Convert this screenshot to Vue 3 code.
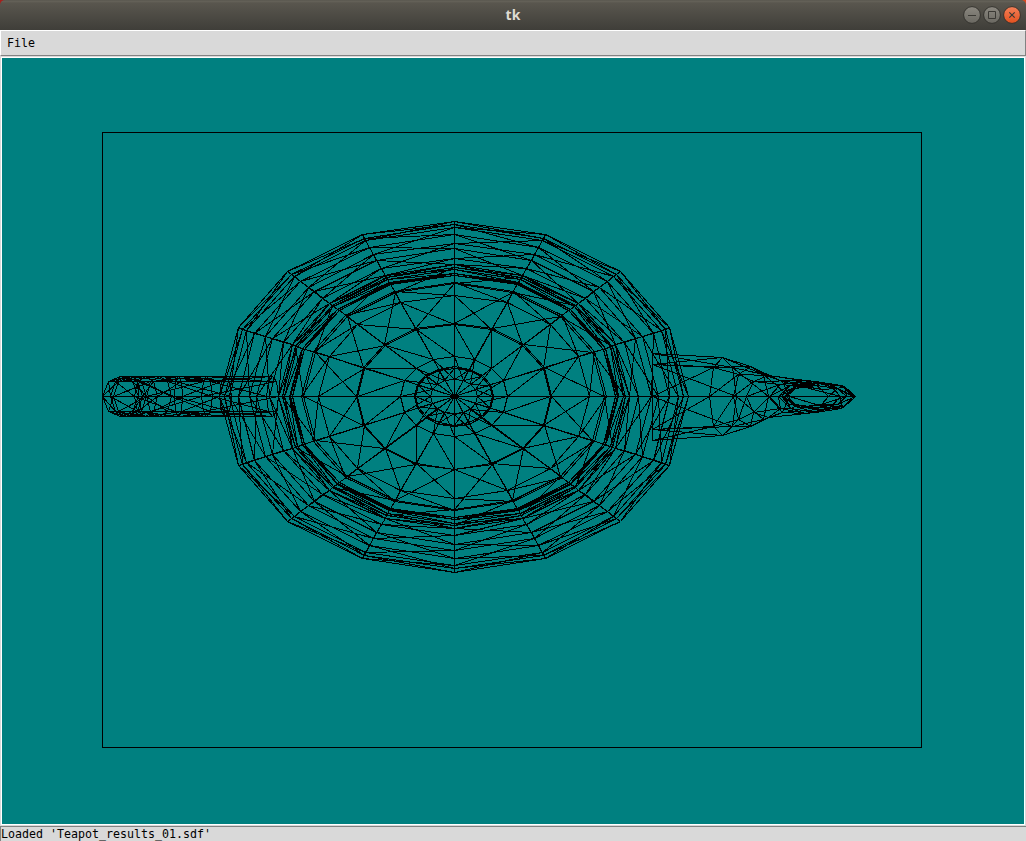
<script setup>
const CX = 453.5, CY = 396.1, SX = 117.03, SY = 87.77

// Profile curves of the revolved parts, as radii of cubic control points.
const profiles = [
  [0, 0.8, 0, 0.2],
  [0.2, 0.4, 1.3, 1.3],
  [1.4, 1.3375, 1.4375, 1.5],
  [1.5, 1.75, 2, 2],
  [2, 2, 1.5, 1.5],
  [1.5, 1.5, 1.425, 0],
]
// Tube patches: rows of [x, y] control points across half the tube.
const tubes = [
  [[[-1.6, 0], [-1.6, .3], [-1.5, .3], [-1.5, 0]], [[-2.3, 0], [-2.3, .3], [-2.5, .3], [-2.5, 0]],
   [[-2.7, 0], [-2.7, .3], [-3, .3], [-3, 0]], [[-2.7, 0], [-2.7, .3], [-3, .3], [-3, 0]]],
  [[[-2.7, 0], [-2.7, .3], [-3, .3], [-3, 0]], [[-2.7, 0], [-2.7, .3], [-3, .3], [-3, 0]],
   [[-2.5, 0], [-2.5, .3], [-2.65, .3], [-2.65, 0]], [[-2, 0], [-2, .3], [-1.9, .3], [-1.9, 0]]],
  [[[1.7, 0], [1.7, .66], [1.7, .66], [1.7, 0]], [[2.6, 0], [2.6, .66], [3.1, .66], [3.1, 0]],
   [[2.3, 0], [2.3, .25], [2.4, .25], [2.4, 0]], [[2.7, 0], [2.7, .25], [3.3, .25], [3.3, 0]]],
  [[[2.7, 0], [2.7, .25], [3.3, .25], [3.3, 0]], [[2.8, 0], [2.8, .25], [3.525, .25], [3.525, 0]],
   [[2.9, 0], [2.9, .15], [3.45, .15], [3.45, 0]], [[2.8, 0], [2.8, .15], [3.2, .15], [3.2, 0]]],
]
const weights = t => [(1 - t) ** 3, 3 * t * (1 - t) ** 2, 3 * t * t * (1 - t), t ** 3]
const STEPS = [0, 0.25, 0.5, 0.75, 1]
const segments = new Set()
const project = ([x, y]) => `${Math.round(CX + x * SX) + 0.5} ${Math.round(CY - y * SY) + 0.5}`

// Unit circle as four cubic quarter arcs, four steps each.
const circle = []
for (let q = 0; q < 4; q++) {
  const c = [1, 0, -1, 0][q], s = [0, 1, 0, -1][q]
  for (const t of STEPS.slice(0, 4)) {
    const w = weights(t)
    const x = w[0] + w[1] + 0.56 * w[2], y = 0.56 * w[1] + w[2] + w[3]
    circle.push([x * c - y * s, x * s + y * c])
  }
}
circle.push(circle[0])

function edge(a, b) {
  const p = project(a), q = project(b)
  if (p !== q) segments.add(p < q ? `M${p}L${q}` : `M${q}L${p}`)
}
function mesh(grid) {
  for (let i = 0; i < grid.length; i++) {
    for (let j = 0; j < grid[i].length; j++) {
      if (i + 1 < grid.length) edge(grid[i][j], grid[i + 1][j])
      if (j + 1 < grid[i].length) edge(grid[i][j], grid[i][j + 1])
      if (i + 1 < grid.length && j + 1 < grid[i].length) edge(grid[i][j], grid[i + 1][j + 1])
    }
  }
}
for (const profile of profiles) {
  mesh(STEPS.map(t => {
    const w = weights(t)
    const r = profile.reduce((s, v, i) => s + v * w[i], 0)
    return circle.map(([x, y]) => [r * x, r * y])
  }))
}
for (const rows of tubes) {
  for (const side of [1, -1]) {
    mesh(STEPS.map(t => {
      const w = weights(t)
      const line = STEPS.map(s => {
        const v = weights(s)
        let x = 0, y = 0
        rows.forEach((row, i) => row.forEach((p, j) => { x += w[i] * v[j] * p[0]; y += w[i] * v[j] * p[1] }))
        return [x, y * side]
      })
      return side === 1 ? line : line.reverse()
    }))
  }
}
const wire = [...segments].join('')
</script>

<template>
  <div class="window">
    <header class="titlebar">
      <span class="title">tk</span>
      <svg class="controls" width="60" height="20" viewBox="0 0 60 20">
        <defs>
          <linearGradient id="grey" x2="0" y2="1"><stop stop-color="#8b8880" /><stop offset="1" stop-color="#6a6861" /></linearGradient>
          <linearGradient id="red" x2="0" y2="1"><stop stop-color="#f58058" /><stop offset="1" stop-color="#e2511f" /></linearGradient>
        </defs>
        <g stroke="#34332e">
          <circle cx="10" cy="10" r="8.4" fill="url(#grey)" />
          <circle cx="30" cy="10" r="8.4" fill="url(#grey)" />
          <circle cx="50" cy="10" r="8.4" fill="url(#red)" />
        </g>
        <g fill="none" stroke="#3a3934">
          <path d="M6 10.500h8M26.500 6.500h7v7h-7z" />
          <path d="M47.300 7.300l5.400 5.400m0-5.400l-5.400 5.400" stroke-width="1.200" />
        </g>
      </svg>
    </header>
    <nav class="menubar"><span class="item">File</span></nav>
    <main class="view">
      <svg class="scene" width="1022" height="766" viewBox="2 58 1022 766" shape-rendering="crispEdges">
        <rect x="102.500" y="132.500" width="819" height="615" />
        <path :d="wire" />
      </svg>
    </main>
    <footer class="status">Loaded 'Teapot_results_01.sdf'</footer>
  </div>
</template>

<style>
body { margin: 0; background: #d9d9d9; overflow: hidden; }
</style>

<style scoped>
.window {
  width: 1026px; height: 841px; display: flex; flex-direction: column;
  background: linear-gradient(90deg, #a5201c 50%, #d9481c 50%);
}
.titlebar {
  flex: none; height: 30px; display: grid; grid-template-columns: 1fr auto 1fr; align-items: center;
  background: linear-gradient(#54524a 0, #66635a 1px, #59564e 3px, #3f3e39 30px);
  border-radius: 5px 5px 0 0;
}
.title { grid-column: 2; font: bold 14px/20px "Noto Sans", "Open Sans", sans-serif; color: #dfdbd2; }
.controls { justify-self: end; margin-right: 4px; }
.menubar {
  flex: none; box-sizing: border-box; height: 26px; border: 1px solid; border-color: #fff #828282 #828282 #fff;
  display: flex; align-items: center; padding-left: 6px; background: #d9d9d9;
}
.item, .status { font: 11.640px/13px "DejaVu Sans Mono", monospace; color: #000; white-space: pre; }
.view { flex: none; box-sizing: border-box; height: 770px; border: 1px solid #d9d9d9; background: #008080; }
.scene { display: block; border: 1px solid #fff; }
.scene rect, .scene path { fill: none; stroke: #000; stroke-width: 1; }
.status {
  flex: 1; box-sizing: border-box; padding-top: 1px; background: #d9d9d9;
  border-top: 1px solid #828282; border-left: 1px solid #828282;
}
</style>
